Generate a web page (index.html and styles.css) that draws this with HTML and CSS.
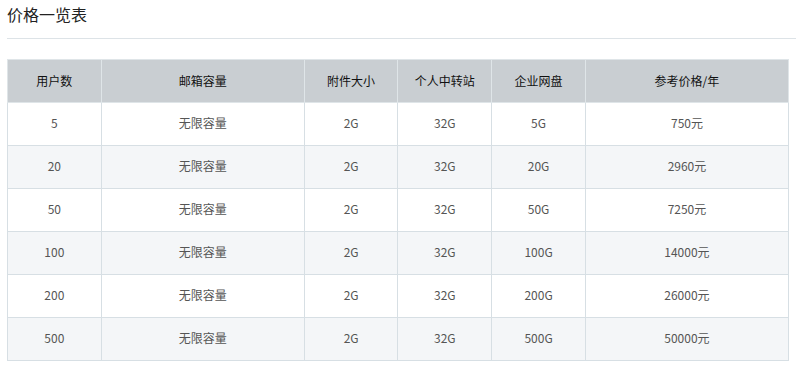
FILE: index.html
```html
<!DOCTYPE html>
<html lang="zh">
<head>
<meta charset="utf-8">
<link rel="stylesheet" href="styles.css">
</head>
<body>
<div class="page">
  <h2 class="title">价格一览表</h2>
  <table class="price">
    <colgroup>
      <col class="c-narrow"><col class="c-wide"><col class="c-narrow"><col class="c-narrow"><col class="c-narrow"><col class="c-wide">
    </colgroup>
    <thead>
      <tr><th>用户数</th><th>邮箱容量</th><th>附件大小</th><th>个人中转站</th><th>企业网盘</th><th>参考价格/年</th></tr>
    </thead>
    <tbody>
      <tr><td>5</td><td>无限容量</td><td>2G</td><td>32G</td><td>5G</td><td>750元</td></tr>
      <tr><td>20</td><td>无限容量</td><td>2G</td><td>32G</td><td>20G</td><td>2960元</td></tr>
      <tr><td>50</td><td>无限容量</td><td>2G</td><td>32G</td><td>50G</td><td>7250元</td></tr>
      <tr><td>100</td><td>无限容量</td><td>2G</td><td>32G</td><td>100G</td><td>14000元</td></tr>
      <tr><td>200</td><td>无限容量</td><td>2G</td><td>32G</td><td>200G</td><td>26000元</td></tr>
      <tr><td>500</td><td>无限容量</td><td>2G</td><td>32G</td><td>500G</td><td>50000元</td></tr>
    </tbody>
  </table>
</div>
</body>
</html>
```
FILE: styles.css
```css
html, body {
  margin: 0;
  padding: 0;
  background: #fff;
}
body {
  font-family: "Noto Sans CJK SC", "Noto Sans", sans-serif;
}
.page {
  padding: 0 4px 0 7px;
}
.title {
  margin: 0;
  font-size: 16px;
  font-weight: normal;
  color: #222;
  line-height: 24px;
  padding-top: 2px;
  padding-bottom: 12px;
  border-bottom: 1px solid #dde3e7;
}
.price {
  margin-top: 20px;
  width: 782px;
  border-collapse: collapse;
  table-layout: fixed;
  font-size: 12px;
}
.c-narrow { width: 12%; }
.c-wide { width: 26%; }
.price th, .price td {
  height: 38px;
  padding: 0 0 4px;
  text-align: center;
  border: 1px solid #d7dfe4;
}
.price th {
  padding-bottom: 2px;
  height: 40px;
  background: #c9ced2;
  color: #111;
  font-weight: normal;
  border-color: #dfe5e8;
}
.price td {
  color: #555;
}
.price tbody tr:nth-child(even) td {
  background: #f4f6f8;
}
```
